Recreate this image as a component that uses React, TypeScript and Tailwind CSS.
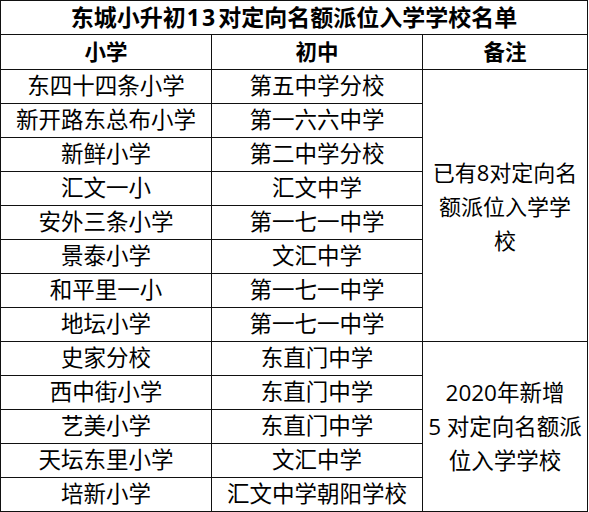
import React from "react";

const rows: [string, string][] = [
  ["东四十四条小学", "第五中学分校"],
  ["新开路东总布小学", "第一六六中学"],
  ["新鲜小学", "第二中学分校"],
  ["汇文一小", "汇文中学"],
  ["安外三条小学", "第一七一中学"],
  ["景泰小学", "文汇中学"],
  ["和平里一小", "第一七一中学"],
  ["地坛小学", "第一七一中学"],
  ["史家分校", "东直门中学"],
  ["西中街小学", "东直门中学"],
  ["艺美小学", "东直门中学"],
  ["天坛东里小学", "文汇中学"],
  ["培新小学", "汇文中学朝阳学校"],
];

export default function App() {
  return (
    <div className="w-[589px] h-[512px] bg-white font-['Open_Sans','Noto_Sans_CJK_SC',sans-serif] text-black">
      <div className="grid w-[588px] grid-cols-[210px_210px_164px] grid-rows-[33px_34px_repeat(13,33px)] gap-px bg-[#111] p-px">
        <div className="col-span-3 flex items-center justify-center bg-white text-[23px] font-bold leading-none">
          东城小升初<span className="px-[1px] tracking-[2px]">13</span>对定向名额派位入学学校名单
        </div>
        <div className="flex items-center justify-center bg-white text-[21.5px] font-bold leading-none">小学</div>
        <div className="flex items-center justify-center bg-white text-[21.5px] font-bold leading-none">初中</div>
        <div className="flex items-center justify-center bg-white text-[21.5px] font-bold leading-none">备注</div>
        {rows.map(([a, b], i) => (
          <React.Fragment key={i}>
            <div
              className="col-start-1 flex items-center justify-center bg-white text-[22.5px] leading-none"
              style={{ gridRowStart: i + 3 }}
            >
              {a}
            </div>
            <div
              className="col-start-2 flex items-center justify-center bg-white text-[22.5px] leading-none"
              style={{ gridRowStart: i + 3 }}
            >
              {b}
            </div>
          </React.Fragment>
        ))}
        <div className="col-start-3 row-start-3 row-span-8 flex flex-col items-center justify-center bg-white text-center text-[22px] leading-[34px]">
          <span>已有8对定向名</span>
          <span>额派位入学学</span>
          <span>校</span>
        </div>
        <div className="col-start-3 row-start-11 row-span-5 flex flex-col items-center justify-center bg-white text-center text-[22.5px] leading-[34px]">
          <span>2020年新增</span>
          <span>5 对定向名额派</span>
          <span>位入学学校</span>
        </div>
      </div>
    </div>
  );
}
